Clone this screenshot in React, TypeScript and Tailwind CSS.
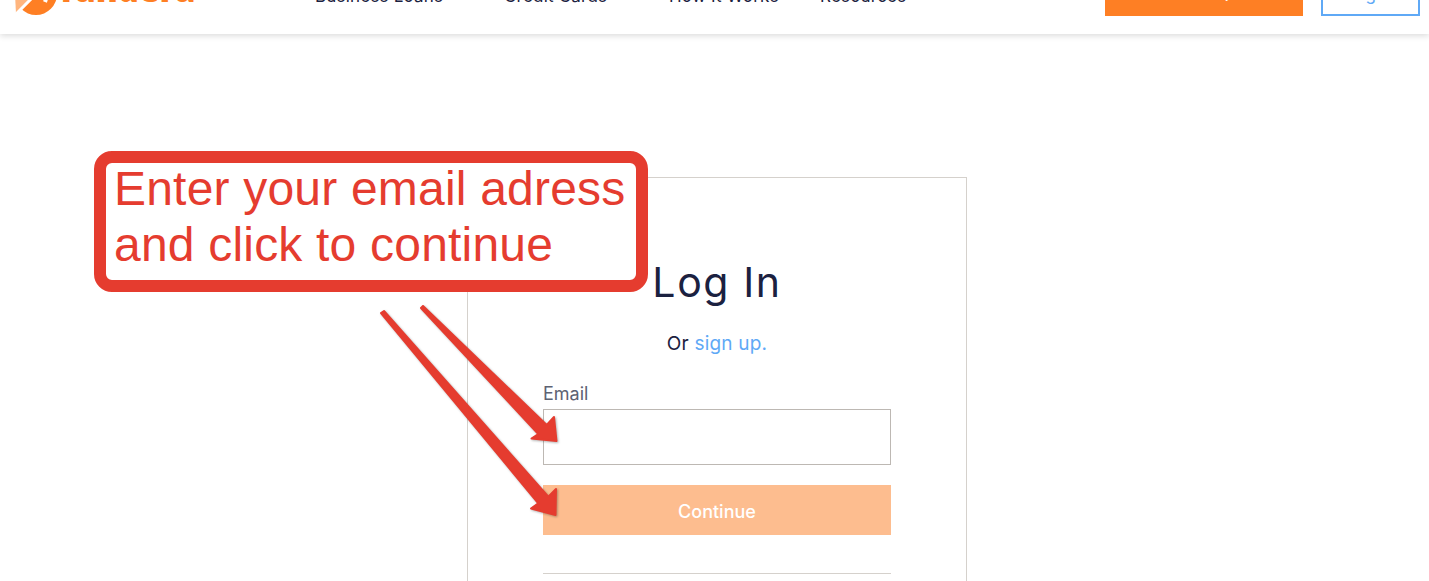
const navLinks = [
  { label: "Business Loans", className: "w-[189px]" },
  { label: "Credit Cards", className: "w-[165px]" },
  { label: "How It Works", className: "w-[151px]" },
  { label: "Resources", className: "w-auto" },
];

function Logo() {
  return (
    <div className="ml-[15px] flex w-[300px] shrink-0 items-end">
      <svg width="42" height="42" viewBox="0 0 42 42" className="mb-[1px] shrink-0">
        <circle cx="21" cy="21" r="21" fill="#fe7f24" />
        <path d="M0 21 A21 21 0 0 1 21 0 L32 10 L1 41 Z" fill="#ffb57e" />
        <path d="M0 42 L32 10" stroke="#ffffff" strokeWidth="3" fill="none" />
        <path d="M33 20 L30 29" stroke="#ffffff" strokeWidth="4" fill="none" />
      </svg>
      <span className="mb-[6px] ml-[3px] font-['Open_Sans',sans-serif] text-[33px] leading-[40px] font-extrabold text-[#fe7f24]">
        fundera
      </span>
    </div>
  );
}

function Header() {
  return (
    <header className="relative z-10 -mt-[51px] flex h-[85px] items-end bg-white pb-[18px] shadow-[0_2px_6px_rgba(0,0,0,0.14)]">
      <Logo />
      <nav className="mb-[9px] flex">
        {navLinks.map((link) => (
          <a key={link.label} className={`${link.className} font-['Inter',sans-serif] text-[17px] leading-[22px] tracking-[0.2px] text-[#1b2140]`}>
            {link.label}
          </a>
        ))}
      </nav>
      <button className="ml-auto h-[66px] w-[198px] whitespace-nowrap bg-[#fe7f24] pb-[9px] pt-[31px] font-['Inter',sans-serif] text-[17px] leading-[22px] text-white">
        Get A Free Quote &gt;
      </button>
      <button className="ml-[18px] mr-[9px] h-[66px] w-[99px] border-2 border-[#5fa9f6] pb-[7px] pt-[29px] font-['Inter',sans-serif] text-[17px] leading-[22px] text-[#5fa9f6]">
        Log In
      </button>
    </header>
  );
}

function LoginCard() {
  return (
    <main className="ml-[467px] mt-[143px] h-[404px] w-[500px] border border-b-0 border-[#d5d1cc] px-[75px] pt-[78px] font-['Inter',sans-serif]">
      <h1 className="text-center text-[41px] leading-[52px] tracking-[1.6px] text-[#1b2140]">
        Log In
      </h1>
      <p className="mt-[24px] text-center text-[19px] leading-[24px] tracking-[0.2px] text-[#1b2140]">
        Or <a className="text-[#5fa9f6]">sign up.</a>
      </p>
      <label className="mt-[26px] block text-[18px] leading-[24px] text-[#5d6272]">
        Email
      </label>
      <input className="mt-[3px] block h-[56px] w-full border border-[#bdb8b3] bg-white" />
      <button className="mt-[20px] h-[50px] w-full bg-[#fdbd8f] pt-[3px] text-[18px] font-medium text-white">
        Continue
      </button>
      <div className="mt-[38px] border-t border-[#d5d1cc]" />
    </main>
  );
}

function Annotations() {
  return (
    <>
      <div className="absolute left-[94px] top-[151px] h-[141px] w-[554px] whitespace-nowrap rounded-[18px] border-[12px] border-[#e53c2f] bg-white pl-[8px] font-['Liberation_Sans',sans-serif] text-[48px] leading-[56px] tracking-[0.2px] text-[#e53c2f]">
        <p className="-mt-[2px]">
          Enter your email adress
          <br />
          and click to continue
        </p>
      </div>
      <svg width="1429" height="581" className="pointer-events-none absolute left-0 top-0">
        <g fill="#e53c2f" stroke="#e53c2f" strokeWidth="2" strokeLinejoin="round" className="drop-shadow-[1px_1px_1px_rgba(0,0,0,0.3)]">
          <polygon points="423,306 546.7,425 554,417 556.5,441 531.5,438.5 538.3,434 421,308" />
          <polygon points="384,311 548.3,496.7 556,489 555.5,515 531,508.5 538.3,503.3 381,313" />
        </g>
      </svg>
    </>
  );
}

export default function App() {
  return (
    <div className="relative h-[581px] w-[1429px] overflow-hidden bg-white">
      <Header />
      <LoginCard />
      <Annotations />
    </div>
  );
}
